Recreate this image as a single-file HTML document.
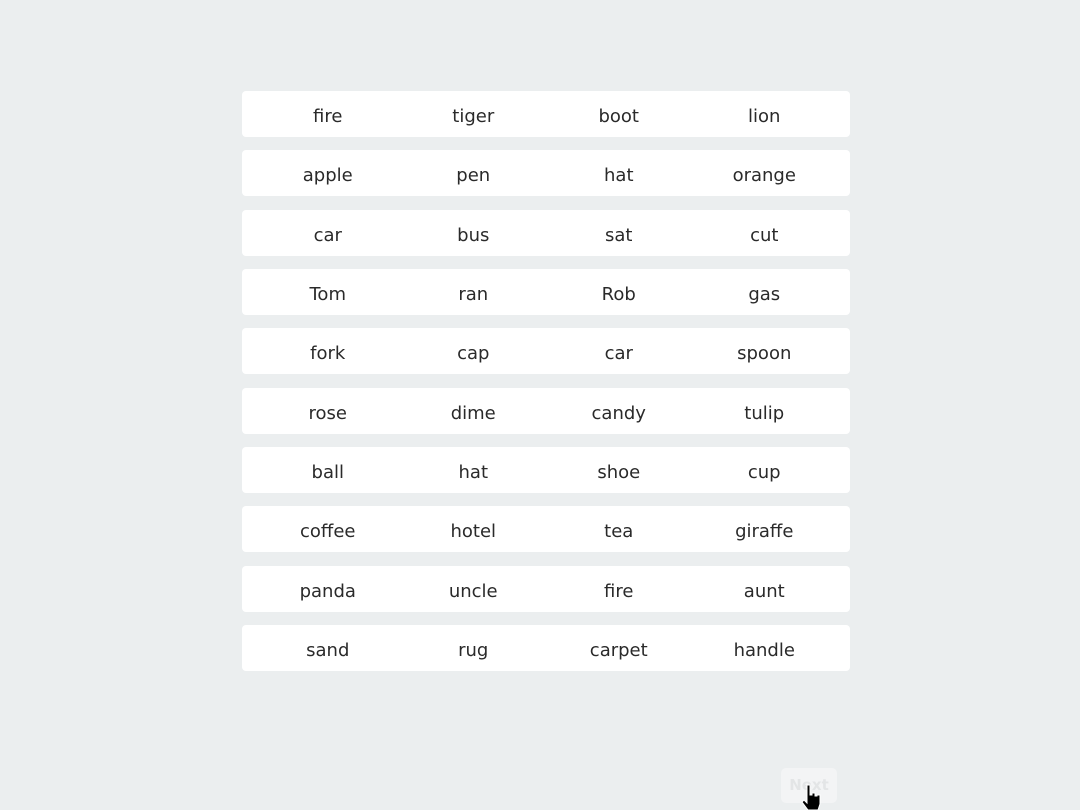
<!DOCTYPE html>
<html><head><meta charset="utf-8"><style>
html,body{margin:0;padding:0;width:1080px;height:810px;background:#ebeeef;overflow:hidden;font-family:"DejaVu Sans","Liberation Sans",sans-serif}
.row{position:absolute;left:242px;width:608px;height:46px;background:#fff;border-radius:4px;display:flex;padding:0 13px;box-sizing:border-box}
.row span{flex:1;text-align:center;line-height:52px;font-size:18px;color:#2a2a2a}
.btn{position:absolute;left:781px;top:768px;width:56px;height:35px;background:#f3f4f5;border-radius:5px;text-align:center;line-height:35px;font-size:15px;font-weight:bold;color:#e3e5e6}
</style></head><body>
<div class="row" style="top:91px"><span>fire</span><span>tiger</span><span>boot</span><span>lion</span></div>
<div class="row" style="top:150px"><span>apple</span><span>pen</span><span>hat</span><span>orange</span></div>
<div class="row" style="top:210px"><span>car</span><span>bus</span><span>sat</span><span>cut</span></div>
<div class="row" style="top:269px"><span>Tom</span><span>ran</span><span>Rob</span><span>gas</span></div>
<div class="row" style="top:328px"><span>fork</span><span>cap</span><span>car</span><span>spoon</span></div>
<div class="row" style="top:388px"><span>rose</span><span>dime</span><span>candy</span><span>tulip</span></div>
<div class="row" style="top:447px"><span>ball</span><span>hat</span><span>shoe</span><span>cup</span></div>
<div class="row" style="top:506px"><span>coffee</span><span>hotel</span><span>tea</span><span>giraffe</span></div>
<div class="row" style="top:566px"><span>panda</span><span>uncle</span><span>fire</span><span>aunt</span></div>
<div class="row" style="top:625px"><span>sand</span><span>rug</span><span>carpet</span><span>handle</span></div>
<div class="btn">Next</div>
<svg style="position:absolute;left:800px;top:784px" width="22" height="26" viewBox="0 0 22 26">
<path d="M7 1h3v10h2v-2h3v3h2v-1h3v9l-2 6H8l-6-8 2-2 3 3z" fill="#000" stroke="#fff" stroke-width="1"/>
</svg>
</body></html>
